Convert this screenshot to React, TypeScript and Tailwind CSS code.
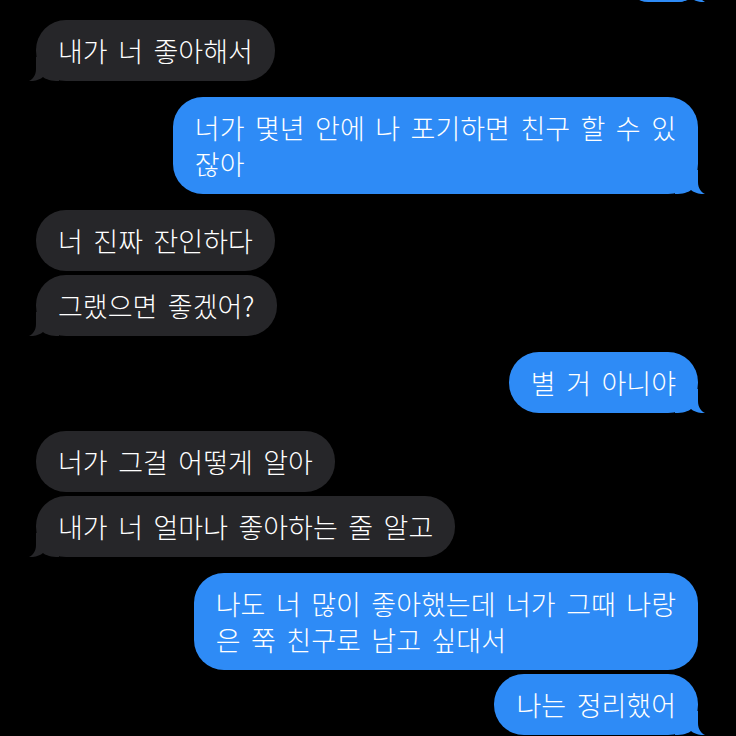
import React from 'react'

type Msg = {
  me: boolean
  lines: string[]
  tail: boolean
  gap: string
}

// 대화 내용 (위에서 아래로)
const messages: Msg[] = [
  { me: false, lines: ['내가 너 좋아해서'], tail: true, gap: 'mt-[18px]' },
  { me: true, lines: ['너가 몇년 안에 나 포기하면 친구 할 수 있', '잖아'], tail: true, gap: 'mt-4' },
  { me: false, lines: ['너 진짜 잔인하다'], tail: false, gap: 'mt-4' },
  { me: false, lines: ['그랬으면 좋겠어?'], tail: true, gap: 'mt-1' },
  { me: true, lines: ['별 거 아니야'], tail: true, gap: 'mt-4' },
  { me: false, lines: ['너가 그걸 어떻게 알아'], tail: false, gap: 'mt-[18px]' },
  { me: false, lines: ['내가 너 얼마나 좋아하는 줄 알고'], tail: true, gap: 'mt-1' },
  { me: true, lines: ['나도 너 많이 좋아했는데 너가 그때 나랑', '은 쭉 친구로 남고 싶대서'], tail: false, gap: 'mt-4' },
  { me: true, lines: ['나는 정리했어'], tail: true, gap: 'mt-1' },
]

// 말풍선 꼬리
function Tail({ me }: { me: boolean }) {
  return (
    <svg
      width="30"
      height="24"
      viewBox="0 0 30 24"
      className={me ? 'absolute bottom-0 right-[-7px] -scale-x-100' : 'absolute bottom-0 left-[-7px]'}
    >
      <path
        d="M7 0 L7 12 C7 18 4 22 0 24 C6 24.5 11 22.5 14 20 C17 22.5 22 24 30 24 L30 0 Z"
        fill={me ? '#2E8BF6' : '#262629'}
      />
    </svg>
  )
}

function Bubble({ msg }: { msg: Msg }) {
  return (
    <div className={`flex ${msg.me ? 'justify-end' : 'justify-start'} ${msg.gap}`}>
      <div
        className={`relative rounded-[30px] px-[22px] py-[12.5px] text-white font-light text-[27px] leading-[36px] tracking-normal [word-spacing:4.5px] whitespace-nowrap ${
          msg.me ? 'bg-[#2E8BF6]' : 'bg-[#262629]'
        }`}
      >
        {msg.tail && <Tail me={msg.me} />}
        <div className="relative">
          {msg.lines.map((l, i) => (
            <div key={i}>{l}</div>
          ))}
        </div>
      </div>
    </div>
  )
}

export default function App() {
  return (
    <div
      className="h-[736px] w-[736px] overflow-hidden bg-black pl-[36px] pr-[38px] flex flex-col"
      style={{ fontFamily: '"Noto Sans CJK KR", "Noto Sans", sans-serif' }}
    >
      {/* 위쪽에 잘린 이전 말풍선 */}
      <div className="flex justify-end -mt-[38px]">
        <div className="relative h-[40px] w-[70px] rounded-[20px] bg-[#2E8BF6]">
          <Tail me />
        </div>
      </div>
      {messages.map((m, i) => (
        <Bubble key={i} msg={m} />
      ))}
    </div>
  )
}
